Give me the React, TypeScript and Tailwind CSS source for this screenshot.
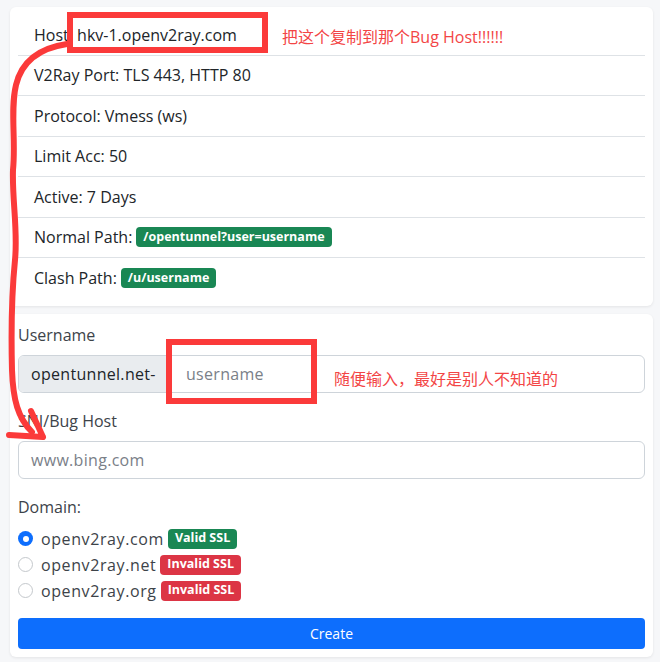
import type { ReactNode } from 'react'

const rows: { label: string; badge?: string }[] = [
	{ label: 'Host: hkv-1.openv2ray.com' },
	{ label: 'V2Ray Port: TLS 443, HTTP 80' },
	{ label: 'Protocol: Vmess (ws)' },
	{ label: 'Limit Acc: 50' },
	{ label: 'Active: 7 Days' },
	{ label: 'Normal Path:', badge: '/opentunnel?user=username' },
	{ label: 'Clash Path:', badge: '/u/username' },
]

function Badge({ color, children }: { color: string; children: ReactNode }) {
	return (
		<span
			className={`inline-flex items-center h-[20px] px-[7px] rounded-[4px] text-[12.5px] font-bold text-white leading-none tracking-normal ${color}`}
		>
			{children}
		</span>
	)
}

const domains = [
	{ name: 'openv2ray.com', ok: true },
	{ name: 'openv2ray.net', ok: false },
	{ name: 'openv2ray.org', ok: false },
]

export default function App() {
	return (
		<div
			className="relative w-[660px] h-[662px] bg-[#f6f7f9] pt-[7px] pl-[10px] pr-[7px] text-[#212529] overflow-hidden"
			style={{ fontFamily: '"Open Sans", "Noto Sans CJK SC", sans-serif' }}
		>
			{/* Info card */}
			<div className="bg-white rounded-[6px] shadow-[0_1px_3px_rgba(0,0,0,0.08)] p-[8px] pb-[7px]">
				<ul>
					{rows.map((r, i) => (
						<li
							key={r.label}
							className={`flex items-center gap-[4px] px-[16px] h-[40.5px] text-[16px] ${i < rows.length - 1 ? 'border-b border-[#dee2e6]' : ''}`}
						>
							<span>{r.label}</span>
							{r.badge && <Badge color="bg-[#198754]">{r.badge}</Badge>}
						</li>
					))}
				</ul>
			</div>

			{/* Form card */}
			<div className="mt-[8px] bg-white rounded-[6px] shadow-[0_1px_3px_rgba(0,0,0,0.08)] px-[8px] pt-[9px] pb-[8px] text-[#3d4349]">
				<label className="block text-[16px] leading-[24px]">Username</label>
				<div className="mt-[8px] flex h-[38px] border border-[#ced4da] rounded-[6px] overflow-hidden text-[16px]">
					<span className="flex items-center px-[12px] bg-[#e9ecef] border-r border-[#ced4da] text-[#212529] w-[148px] tracking-[0.3px]">
						opentunnel.net-
					</span>
					<span className="flex items-center px-[19px] text-[#7a8088] tracking-[0.3px]">username</span>
				</div>

				<label className="block mt-[16px] text-[16px] leading-[24px]">SNI/Bug Host</label>
				<div className="mt-[8px] flex items-center h-[38px] px-[12px] border border-[#ced4da] rounded-[6px] text-[16px] text-[#7a8088] tracking-[0.3px]">
					www.bing.com
				</div>

				<div className="mt-[16px] text-[16px] leading-[24px]">Domain:</div>
				<div className="mt-[7px] flex flex-col">
					{domains.map((d) => (
						<div key={d.name} className="flex items-center h-[26px] gap-[4px] text-[16px]">
							{d.ok ? (
								<span className="w-[15px] h-[15px] rounded-full bg-[#0d6efd] flex items-center justify-center">
									<span className="w-[6px] h-[6px] rounded-full bg-white" />
								</span>
							) : (
								<span className="w-[15px] h-[15px] rounded-full border border-[#c4c8cc] bg-white" />
							)}
							<span className="ml-[4px] tracking-[0.6px]">{d.name}</span>
							<Badge color={d.ok ? 'bg-[#198754]' : 'bg-[#dc3545]'}>
								{d.ok ? 'Valid SSL' : 'Invalid SSL'}
							</Badge>
						</div>
					))}
				</div>

				<button className="mt-[14px] w-full h-[31px] rounded-[4px] bg-[#0d6efd] text-white text-[14px]">
					Create
				</button>
			</div>

			{/* Annotations */}
			<div className="absolute left-[67px] top-[12px] w-[201px] h-[41px] border-[6px] border-[#fb3a3a]" />
			<div className="absolute left-[166px] top-[339px] w-[151px] h-[65px] border-[6px] border-[#fb3a3a]" />
			<span className="absolute left-[282px] top-[25px] text-[16px] text-[#f34545]">
				把这个复制到那个Bug Host!!!!!!
			</span>
			<span className="absolute left-[334px] top-[367px] text-[16px] text-[#f34545]">
				随便输入，最好是别人不知道的
			</span>
			<svg className="absolute left-0 top-0 pointer-events-none" width="660" height="662">
				<path
					d="M67 44 C40 48 22 60 16 85 C10 110 16 140 13 170 C12 200 18 230 15 260 C12 290 11 330 12 370 C13 400 18 418 32 432"
					fill="none"
					stroke="#fb3a3a"
					strokeWidth="6"
					strokeLinecap="round"
				/>
				<path
					d="M9 435 L43 437 M31 411 L43 437"
					fill="none"
					stroke="#fb3a3a"
					strokeWidth="6"
					strokeLinecap="round"
				/>
			</svg>
		</div>
	)
}
